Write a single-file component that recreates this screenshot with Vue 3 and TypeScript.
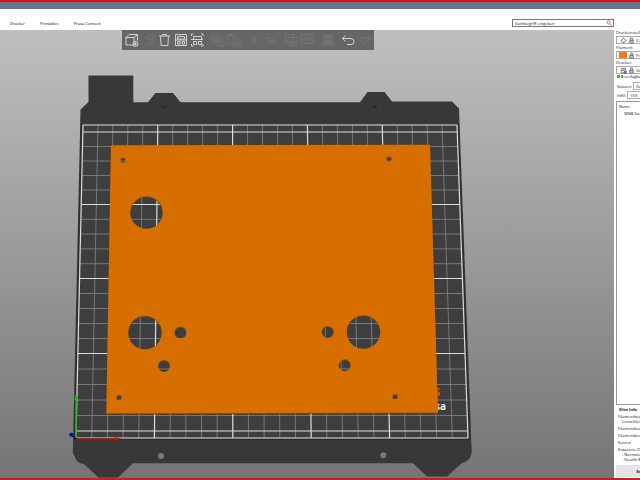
<script setup lang="ts">
import { ref } from 'vue'

interface Line { x1: number; y1: number; x2: number; y2: number; bold: boolean }
interface Tool { name: string; icon: string; on: boolean; start?: boolean }
interface Hole { x: number; y: number; r: number }

const search = ref('')
const infill = ref('15%')

const bedTop = 125
const bedBottom = 438
const leftAt = (y: number) => 83 - (7 * (y - bedTop)) / (bedBottom - bedTop)
const rightAt = (y: number) => 457 + (11 * (y - bedTop)) / (bedBottom - bedTop)

// Columns every 10 mm, with a heavier one every 50 mm
const columns: Line[] = Array.from({ length: 26 }, (_, i) => ({
  x1: 83 + (374 * i) / 25,
  y1: bedTop,
  x2: 76 + (392 * i) / 25,
  y2: bedBottom,
  bold: i % 5 === 0,
}))
const majors = [132, 204.5, 278.5, 353.5, 431]
const rowYs: { y: number; bold: boolean }[] = [{ y: bedTop, bold: true }, { y: bedBottom, bold: true }]
majors.forEach((y, i) => {
  rowYs.push({ y, bold: true })
  const next = majors[i + 1]
  if (next) for (let k = 1; k < 5; k++) rowYs.push({ y: y + ((next - y) * k) / 5, bold: false })
})
const rows: Line[] = rowYs.map(({ y, bold }) => ({ x1: leftAt(y), y1: y, x2: rightAt(y), y2: y, bold }))
const grid = [...columns, ...rows].sort((a, b) => Number(a.bold) - Number(b.bold))

const holes: Hole[] = [
  { x: 146.5, y: 212.5, r: 16.3 },
  { x: 145, y: 332.5, r: 16.8 },
  { x: 363.5, y: 332, r: 16.8 },
  { x: 180.5, y: 332.5, r: 6 },
  { x: 164, y: 366, r: 6 },
  { x: 327.8, y: 332, r: 6 },
  { x: 344.7, y: 365.3, r: 6 },
  { x: 123, y: 160, r: 2.6 },
  { x: 389, y: 159, r: 2.6 },
  { x: 119, y: 397.5, r: 2.6 },
  { x: 395, y: 396.5, r: 2.6 },
]
const circle = (h: Hole) =>
  `M${h.x - h.r} ${h.y}a${h.r} ${h.r} 0 1 0 ${h.r * 2} 0a${h.r} ${h.r} 0 1 0 ${-h.r * 2} 0z`
const platePath = 'M111 145.3L430 144.8L438 412.5L106.3 413.3z' + holes.map(circle).join('')

const tools: Tool[] = [
  { name: 'Hinzufügen', on: true, icon: 'M2 5.5h8v7.5h-8zM2 5.5l3-3h8.500l-3.500 3M13.500 2.500v6M14 12a2.500 2.500 0 1 1-5 0a2.500 2.500 0 1 1 5 0M10 12h3M11.500 10.500v3' },
  { name: 'Löschen', on: false, icon: 'M5 6h5v7h-5M8 3h5v7M10 10l3 3M13 10l-3 3' },
  { name: 'Alle löschen', on: true, icon: 'M3 4h11M6.500 4v-1.500h4v1.500M4.500 4l.6 9.500h6.800l.6-9.500' },
  { name: 'Anordnen', on: true, icon: 'M3.500 2.500h11v11h-11zM5.500 4.500h7v2.500h-7zM5.500 9.500h2.500v2.500h-2.500zM10 9.500h2.500v2.500h-2.500zM3.500 8h11' },
  { name: 'Auswahl anordnen', on: true, icon: 'M3.500 4v-2h2M13 2h2v2M3.500 12v2h2M13 14h2v-2M5.500 4.500h8v3h-8zM5.500 9.500h3v3h-3zM10.500 9.500h3v3h-3zM3 7.500h12' },
  { name: 'Kopieren', on: false, start: true, icon: 'M3 2.500h5l2 2v5h-7zM8 7h5l2 2v5h-7zM5 5h3M5 7h3M10 10h3M10 12h3' },
  { name: 'Einfügen', on: false, icon: 'M3 3h8v9h-8zM5 2h4v2h-4zM8 6h5l2 2v6h-7zM10 10h3M10 12h3' },
  { name: 'Kopie hinzufügen', on: false, start: true, icon: 'M8 3.500v9M3.500 8h9' },
  { name: 'Kopie entfernen', on: false, icon: 'M3.500 6h5M12.500 9a3 3 0 1 1-6 0a3 3 0 1 1 6 0M8 9h3' },
  { name: 'In Objekte trennen', on: false, start: true, icon: 'M2 2.500h8v8h-8zM5 5.500h9v8h-9zM8 8v4M11 8v4' },
  { name: 'In Teile trennen', on: false, icon: 'M2 2.500h12v9h-12zM5 5v7M8 3v10M11 5v7M9 7h4' },
  { name: 'Variable Schichthöhe', on: false, start: true, icon: 'M4 3h8M3 5h10M3 7h10M3 9h10M2.500 11h11M2.500 13h11M3 4h10M3 6h10M3 8h10M3 10h10M2.500 12h11' },
  { name: 'Rückgängig', on: true, start: true, icon: 'M4.500 3.500L1.500 6.500L4.500 9.500M1.500 6.500h8.500a3 3 0 0 1 0 6h-4' },
  { name: 'Wiederholen', on: false, icon: 'M3 6h10L10.500 3.500M13 6l-2.500 3M3 6c0 4 3 5 6 5' },
]
</script>

<template>
  <div class="app">
    <div class="titlebar"></div>
    <header class="menubar">
      <nav class="menu">
        <a href="#">Drucker</a>
        <a href="#">Printables</a>
        <a href="#">Prusa Connect</a>
      </nav>
      <div class="search">
        <input v-model="search" type="text" placeholder="Suchbegriff eingeben" aria-label="Suchbegriff eingeben" />
        <svg viewBox="0 0 8 8" aria-hidden="true"><circle cx="3.500" cy="3.200" r="2.200" /><path d="M5 5L7.500 7.500" /></svg>
      </div>
    </header>

    <div class="workspace">
      <main class="stage">
        <svg class="scene" viewBox="0 30 614 448" preserveAspectRatio="xMidYMid slice" role="img" aria-label="Druckbett">
          <path
            class="bed"
            fill-rule="evenodd"
            d="M88.500 75.500H133.300V102.300H148L155.500 93H173L180.500 102.300H360L367.500 92H384.500L392 101.500H452L459 108.500L471.700 452Q471 461 462 463L447 476.500H427L413 463.300H133L118 477.500H98.500L84 464Q76 463 74.500 456L72.800 453L80.500 109.500L88.500 102z
               M158 456a3 3 0 1 0 6 0a3 3 0 1 0-6 0z M380.300 455.300a3 3 0 1 0 6 0a3 3 0 1 0-6 0z"
          />
          <path class="sheet" d="M81.500 123.500H458.500L469.500 439.500H74.500z" />
          <path class="edge" d="M81.500 123.500L74.500 439.500H469.500L458.500 123.500" />
          <path class="notch" d="M162.500 106.500l2 1.500l2-1.500M373 106l2 1.500l2-1.500" />
          <line
            v-for="(l, i) in grid"
            :key="i"
            :class="l.bold ? 'major' : 'minor'"
            :x1="l.x1"
            :y1="l.y1"
            :x2="l.x2"
            :y2="l.y2"
          />
          <text class="mark model" x="440" y="396" text-anchor="end">MK3S</text>
          <text class="mark" x="446" y="410" text-anchor="end">Prusa</text>
          <path class="side" :d="platePath" fill-rule="evenodd" transform="translate(0 1)" />
          <path class="plate" :d="platePath" fill-rule="evenodd" />
          <path class="axis-y" d="M76 438V399" />
          <path class="tip-y" d="M74.300 400L76 393.500L77.700 400z" />
          <path class="axis-x" d="M76 438.800H116" />
          <path class="tip-x" d="M115 437L121.500 438.800L115 440.600z" />
          <path class="axis-z" d="M76 439L71.500 435" />
          <circle class="tip-z" cx="71.300" cy="434.800" r="2" />
        </svg>

        <div class="toolbar" role="toolbar" aria-label="Werkzeuge">
          <button
            v-for="t in tools"
            :key="t.name"
            type="button"
            :class="{ start: t.start }"
            :disabled="!t.on"
            :aria-label="t.name"
          >
            <svg viewBox="0 0 16 16" aria-hidden="true"><path :d="t.icon" /></svg>
          </button>
        </div>
      </main>

      <aside class="panel">
        <div class="preset">
          <label for="print">Druckeinstellungen:</label>
          <div class="combo">
            <svg viewBox="0 0 8 8" aria-hidden="true"><circle class="gear" cx="4" cy="4" r="2.200" /><path class="gear" d="M4 .8v1M4 6.200v1M.8 4h1M6.200 4h1" /></svg>
            <svg viewBox="0 0 8 8" aria-hidden="true"><path class="lock" d="M2 4h4v3H2zM2.500 4V2.500a1.500 1.500 0 0 1 3 0V4" /></svg>
            <select id="print"><option>0.20mm QUALITY</option></select>
          </div>
        </div>
        <div class="preset">
          <label for="filament">Filament:</label>
          <div class="combo">
            <span class="swatch"></span>
            <svg viewBox="0 0 8 8" aria-hidden="true"><path class="lock" d="M2 4h4v3H2zM2.500 4V2.500a1.500 1.500 0 0 1 3 0V4" /></svg>
            <select id="filament"><option>Prusament PLA</option></select>
          </div>
        </div>
        <div class="preset">
          <label for="printer">Drucker:</label>
          <div class="combo">
            <svg viewBox="0 0 8 8" aria-hidden="true"><path class="frame" d="M1.500 1.500h5v5h-5zM1.500 4h3" /><path class="hot" d="M3.500 2h2v2h-2z" /><path class="blue" d="M4.500 4.500h3v3h-3z" /></svg>
            <svg viewBox="0 0 8 8" aria-hidden="true"><path class="lock" d="M2 4h4v3H2zM2.500 4V2.500a1.500 1.500 0 0 1 3 0V4" /></svg>
            <select id="printer"><option>Original Prusa</option></select>
          </div>
        </div>
        <p class="status"><i></i><b>0</b> verfügbar</p>
        <div class="field">
          <label for="supports">Stützen:</label>
          <select id="supports"><option>Keine</option></select>
        </div>
        <div class="field">
          <label for="infill">Infill:</label>
          <select id="infill" v-model="infill"><option>15%</option></select>
        </div>
        <section class="objects">
          <h2>Name</h2>
          <p>WNB Stellplatte</p>
        </section>
        <section class="info">
          <h2>Slice Info</h2>
          <p>Filamentbedarf (g)<span>(einschließlich Spule)</span></p>
          <p>Filamentbedarf (m)</p>
          <p>Filamentbedarf (mm³)</p>
          <p>Kosten</p>
          <p>Erwartete Druckzeit:<span>- Normaler Modus</span><span>- Stealth Modus</span></p>
        </section>
        <button class="export" type="button">Export</button>
      </aside>
    </div>
  </div>
</template>

<style>
body {
  margin: 0;
}
</style>

<style scoped>
.app {
  display: flex;
  flex-direction: column;
  box-sizing: border-box;
  height: 100vh;
  overflow: hidden;
  border-top: 2px solid #d01619;
  border-bottom: 2px solid #d8191c;
  background: #fff;
  color: #111;
  font-family: "Open Sans", "Noto Sans", sans-serif;
  font-size: 4px;
  line-height: 5px;
}
.titlebar {
  flex: none;
  height: 7px;
  background: #65748b;
}
.menubar {
  display: flex;
  flex: none;
  align-items: center;
  justify-content: space-between;
  box-sizing: border-box;
  height: 21px;
  padding: 7px 26px 0 10px;
}
.menu {
  display: flex;
  gap: 15px;
}
.menu a {
  color: #000;
  text-decoration: none;
}
.search {
  display: flex;
  align-items: center;
  box-sizing: border-box;
  width: 102px;
  height: 8px;
  padding: 0 1px 0 2px;
  border: 1px solid #777;
}
.search input {
  flex: 1;
  min-width: 0;
  height: 6px;
  padding: 0;
  border: 0;
  outline: 0;
  background: transparent;
  font: inherit;
}
.search input::placeholder {
  color: #111;
  opacity: 1;
}
.search svg {
  width: 6px;
  height: 6px;
  fill: none;
  stroke: #c85a2a;
}
.workspace {
  display: flex;
  flex: 1;
  min-height: 0;
}
.stage {
  position: relative;
  flex: 1;
  min-width: 0;
  overflow: hidden;
  background: linear-gradient(#bfbfbf, #757575);
}
.scene {
  display: block;
  width: 100%;
  height: 100%;
}
.bed {
  fill: #383838;
}
.sheet {
  fill: #3e3e3e;
}
.edge {
  fill: none;
  stroke: #2c2c2c;
}
.notch {
  fill: none;
  stroke: #171717;
}
.minor {
  stroke: #858585;
  stroke-width: 0.8;
}
.major {
  stroke: #dcdcdc;
  stroke-width: 1.2;
}
.mark {
  fill: #eee;
  font: bold 10px "Open Sans", sans-serif;
}
.model {
  fill: #d95a1c;
}
.side {
  fill: #8e4a05;
}
.plate {
  fill: #d66f00;
}
.axis-x,
.axis-y,
.axis-z {
  fill: none;
  stroke-width: 1.6;
}
.axis-x {
  stroke: #c41420;
}
.axis-y {
  stroke: #14a81c;
}
.axis-z {
  stroke: #0a0a80;
}
.tip-x {
  fill: #d4101c;
}
.tip-y {
  fill: #08c414;
}
.tip-z {
  fill: #0808a0;
}
.toolbar {
  position: absolute;
  top: 0;
  left: 122px;
  display: flex;
  align-items: center;
  height: 20px;
  padding: 0 1px 0 2px;
  background: #666;
}
.toolbar button {
  width: 16px;
  height: 16px;
  padding: 0;
  border: 0;
  background: none;
}
.toolbar .start {
  margin-left: 5px;
}
.toolbar svg {
  display: block;
  width: 16px;
  height: 16px;
  fill: none;
  stroke: #d2d2d2;
}
.toolbar :disabled svg {
  stroke: #747474;
}
.panel {
  display: flex;
  flex: none;
  flex-direction: column;
  box-sizing: border-box;
  width: 26px;
  padding: 0 0 1px 2px;
  overflow: hidden;
  background: #fff;
  white-space: nowrap;
}
.panel > * {
  flex: none;
  width: 52px;
}
.panel p,
.panel h2 {
  margin: 0;
  font-size: 4px;
}
.panel select {
  flex: 1;
  min-width: 0;
  padding: 0;
  border: 0;
  appearance: none;
  background: transparent;
  color: #111;
  font: inherit;
}
.preset {
  margin-bottom: 1px;
}
.preset label {
  display: block;
  line-height: 6px;
}
.combo {
  display: flex;
  align-items: center;
  gap: 1px;
  box-sizing: border-box;
  height: 8px;
  padding-left: 3px;
  border: 1px solid #aaa;
}
.combo svg {
  flex: none;
  width: 7px;
  height: 7px;
  fill: none;
}
.swatch {
  flex: none;
  width: 8px;
  height: 6px;
  margin-left: -1px;
  background: #ed7d14;
}
.gear,
.lock {
  stroke: #555;
  stroke-width: 0.8;
}
.lock {
  fill: #ccc;
}
.frame {
  stroke: #777;
}
.hot {
  fill: #e8792c;
}
.blue {
  fill: #2878d8;
}
.status {
  display: flex;
  align-items: center;
  gap: 1px;
  padding-left: 1px;
  line-height: 5px;
}
.panel .status {
  margin-top: -1px;
}
.status i {
  width: 3px;
  height: 3px;
  background: #35c010;
}
.field {
  display: flex;
  align-items: center;
  gap: 1px;
  height: 8px;
  margin-top: 1px;
  padding-left: 1px;
}
.status + .field {
  margin-top: 3px;
}
.panel .field select {
  height: 8px;
  padding-left: 2px;
  border: 1px solid #aaa;
}
.panel .objects {
  flex: 1;
  box-sizing: border-box;
  min-height: 20px;
  margin-top: 2px;
  padding: 2px;
  border: 1px solid #999;
}
.objects h2 {
  font-weight: 400;
}
.objects p {
  padding: 2px 0 0 5px;
}
.info {
  display: flex;
  flex-direction: column;
  gap: 2px;
  padding: 2px 0 3px 2px;
}
.info h2 {
  padding-left: 1px;
}
.info span {
  display: block;
  padding-left: 4px;
}
.export {
  height: 12px;
  padding: 0 0 0 2px;
  border: 0;
  background: #e4e4e4;
  color: #111;
  font: bold 4px "Open Sans", sans-serif;
}
</style>
